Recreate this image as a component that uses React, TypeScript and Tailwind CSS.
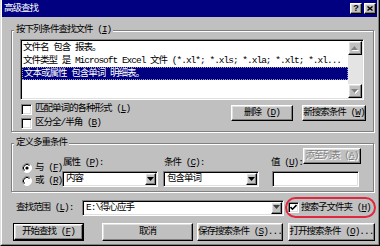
import type { ReactNode } from 'react'

const raised =
  'bg-[#c0c0c0] border border-t-white border-l-white border-r-black border-b-black shadow-[inset_-1px_-1px_0_#808080,inset_1px_1px_0_#dfdfdf]'
const sunken =
  'border border-t-[#808080] border-l-[#808080] border-r-white border-b-white shadow-[inset_1px_1px_0_#000,inset_-1px_-1px_0_#dfdfdf]'

// underlined access key
function K({ c }: { c: string }) {
  return <span className="underline underline-offset-[1px]">{c}</span>
}

function Group({ label, className, children }: { label: ReactNode; className: string; children: ReactNode }) {
  return (
    <div className={`relative border border-[#808080] shadow-[1px_1px_0_#fff,inset_1px_1px_0_#fff] ${className}`}>
      <span className="absolute left-[2px] top-[-7px] bg-[#c0c0c0] px-[2px] leading-[12px] whitespace-nowrap">{label}</span>
      {children}
    </div>
  )
}

function Arrow({ up, color = '#000', shadow }: { up?: boolean; color?: string; shadow?: boolean }) {
  const d = up ? 'M3.5 0 L7 4 L0 4 Z' : 'M0 0 L7 0 L3.5 4 Z'
  return (
    <svg width="8" height="5" viewBox="0 0 8 5">
      {shadow && <path d={d} fill="#fff" transform="translate(1 1)" />}
      <path d={d} fill={color} />
    </svg>
  )
}

function Check({ checked }: { checked?: boolean }) {
  return (
    <span className={`${sunken} bg-white w-[11px] h-[11px] shrink-0 flex items-center justify-center`}>
      {checked && (
        <svg width="7" height="7" viewBox="0 0 7 7">
          <path d="M0.5 3 L2.5 5.2 L6.5 1" stroke="#000" strokeWidth="1.6" fill="none" />
        </svg>
      )}
    </span>
  )
}

function Radio({ checked }: { checked?: boolean }) {
  return (
    <svg width="10" height="10" viewBox="0 0 10 10" className="shrink-0">
      <circle cx="5" cy="5" r="4.5" fill="#fff" />
      <path d="M8.2 1.8 A4.5 4.5 0 0 0 1.8 8.2" stroke="#808080" fill="none" />
      <path d="M7.5 2.5 A3.5 3.5 0 0 0 2.5 7.5" stroke="#000" fill="none" />
      <path d="M1.8 8.2 A4.5 4.5 0 0 0 8.2 1.8" stroke="#fff" fill="none" />
      {checked && <circle cx="5" cy="5" r="1.6" fill="#000" />}
    </svg>
  )
}

function Combo({ text, className, arrowColor }: { text: string; className: string; arrowColor?: string }) {
  return (
    <div className={`${sunken} bg-white h-[16px] p-[1px] flex shrink-0 ${className}`}>
      <span className="flex-1 pl-[2px] leading-[12px] whitespace-nowrap overflow-hidden">{text}</span>
      <span className={`${raised} w-[11px] h-full flex items-center justify-center`}>
        <Arrow color={arrowColor} />
      </span>
    </div>
  )
}

function Btn({ children, className, disabled }: { children: ReactNode; className: string; disabled?: boolean }) {
  return (
    <div
      className={`${raised} shrink-0 flex items-center justify-center whitespace-nowrap leading-[12px] ${
        disabled ? 'text-[#808080] [text-shadow:1px_1px_0_#fff]' : ''
      } ${className}`}
    >
      {children}
    </div>
  )
}

export default function App() {
  return (
    <div className="w-[380px] h-[246px] bg-[#c0c0c0] text-black text-[9.5px] tracking-[-1px] font-['Liberation_Mono','Noto_Sans_CJK_SC',monospace] border-l border-l-[#dfdfdf] border-r border-r-black border-b border-b-black overflow-hidden">
      <div className="h-full border-l border-l-white border-r border-r-[#808080] border-b border-b-[#808080] pr-[1px] pb-[1px] flex flex-col">
        {/* title bar */}
        <div className="h-[17px] shrink-0 bg-[#000080] text-white flex items-center pl-[2px] pr-[1px]">
          <span className="flex-1 leading-[12px]">高级查找</span>
          <span className={`${raised} w-[12px] h-[11px] flex items-center justify-center text-black font-bold text-[9px] leading-none font-['Liberation_Sans',sans-serif] tracking-normal`}>
            ?
          </span>
          <span className={`${raised} ml-[2px] w-[12px] h-[11px] flex items-center justify-center`}>
            <svg width="6" height="5" viewBox="0 0 6 5">
              <path d="M0.5 0.5 L5.5 4.5 M5.5 0.5 L0.5 4.5" stroke="#000" strokeWidth="1.4" />
            </svg>
          </span>
        </div>

        {/* criteria list */}
        <Group
          label={<>按下列条件查找文件 (<K c="I" />)</>}
          className="ml-[9px] mt-[13px] w-[363px] h-[102px] shrink-0 pt-[8px] pl-[8px]"
        >
          <div className={`${sunken} bg-white w-[344px] h-[61px] p-[1px] flex`}>
            <div className="flex-1 min-w-0 flex flex-col">
              <div className="h-[13px] leading-[13px] pl-[1px] whitespace-nowrap">文件名 包含 报表。</div>
              <div className="h-[13px] leading-[13px] pl-[1px] whitespace-nowrap overflow-hidden">
                文件类型 是 Microsoft Excel 文件 (*.xl*; *.xls; *.xla; *.xlt; *.xl...
              </div>
              <div className="h-[13px] leading-[11px] pl-[1px] whitespace-nowrap bg-[#000080] text-white border border-dotted border-[#9a9ac8]">
                文本或属性 包含单词 明细表。
              </div>
            </div>
            <div className="w-[14px] flex flex-col bg-[#e4e4e4]">
              <span className={`${raised} h-[14px] flex items-center justify-center`}>
                <Arrow up color="#808080" shadow />
              </span>
              <span className="flex-1" />
              <span className={`${raised} h-[14px] flex items-center justify-center`}>
                <Arrow color="#808080" shadow />
              </span>
            </div>
          </div>
          <div className="flex mt-[2px]">
            <div className="ml-[1px] flex flex-col">
              <div className="h-[14px] flex items-center gap-[3px]">
                <Check />
                <span className="leading-[12px] whitespace-nowrap">匹配单词的各种形式 (<K c="L" />)</span>
              </div>
              <div className="h-[14px] flex items-center gap-[3px]">
                <Check />
                <span className="leading-[12px] whitespace-nowrap">区分全/半角 (<K c="B" />)</span>
              </div>
            </div>
            <Btn className="ml-auto mt-[3px] w-[62px] h-[16px]">
              删除 (<K c="D" />)
            </Btn>
            <Btn className="ml-[9px] mr-[7px] mt-[3px] w-[64px] h-[16px]">
              新搜索条件 (<K c="W" />)
            </Btn>
          </div>
        </Group>

        {/* more criteria */}
        <Group label="定义多重条件" className="ml-[9px] mt-[11px] w-[363px] h-[49px] shrink-0 pt-[4px] pb-[4px] flex items-end">
          <div className="ml-[10px] w-[40px] shrink-0 flex flex-col">
            <div className="h-[13px] flex items-center gap-[3px]">
              <Radio checked />
              <span className="leading-[12px] whitespace-nowrap">与 (<K c="F" />)</span>
            </div>
            <div className="h-[13px] flex items-center gap-[3px]">
              <Radio />
              <span className="leading-[12px] whitespace-nowrap">或 (<K c="R" />)</span>
            </div>
          </div>
          <div className="w-[96px] shrink-0 flex flex-col">
            <span className="pl-[1px] leading-[12px] mb-[2px] whitespace-nowrap">属性 (<K c="P" />):</span>
            <Combo text="内容" className="w-[96px]" />
          </div>
          <div className="ml-[5px] w-[96px] shrink-0 flex flex-col">
            <span className="pl-[1px] leading-[12px] mb-[2px] whitespace-nowrap">条件 (<K c="C" />):</span>
            <Combo text="包含单词" className="w-[96px]" />
          </div>
          <div className="ml-[12px] w-[89px] shrink-0 flex flex-col">
            <div className="flex justify-between items-start">
              <span className="mt-[9px] leading-[12px] whitespace-nowrap">值 (<K c="U" />):</span>
              <Btn disabled className="w-[58px] h-[16px]">
                添至列表 (<K c="A" />)
              </Btn>
            </div>
            <div className={`${sunken} bg-white ml-[1px] mt-[2px] w-[87px] h-[16px]`} />
          </div>
        </Group>

        {/* look in */}
        <div className="mt-[5px] h-[21px] shrink-0 flex items-center">
          <span className="ml-[14px] w-[66px] shrink-0 leading-[12px] whitespace-nowrap">查找范围 (<K c="L" />):</span>
          <Combo text="E:\得心应手" className="w-[202px]" arrowColor="#404040" />
          <div className="ml-[1px] w-[91px] h-[21px] shrink-0 rounded-full border-2 border-[#e3263f] flex items-center pl-[1px] gap-[2px]">
            <Check checked />
            <span className="leading-[12px] whitespace-nowrap">搜索子文件夹 (<K c="H" />)</span>
          </div>
        </div>

        {/* buttons */}
        <div className="mt-[5px] h-[18px] shrink-0 flex">
          <div className="ml-[11px] w-[71px] h-[18px] shrink-0 border border-black flex">
            <Btn className="flex-1 h-full">
              开始查找 (<K c="F" />)
            </Btn>
          </div>
          <Btn className="ml-[18px] w-[91px] h-[18px]">取消</Btn>
          <Btn className="ml-[4px] w-[86px] h-[18px]">
            保存搜索条件 (<K c="S" />)...
          </Btn>
          <Btn className="ml-[5px] w-[87px] h-[18px]">
            打开搜索条件 (<K c="O" />)...
          </Btn>
        </div>
      </div>
    </div>
  )
}
